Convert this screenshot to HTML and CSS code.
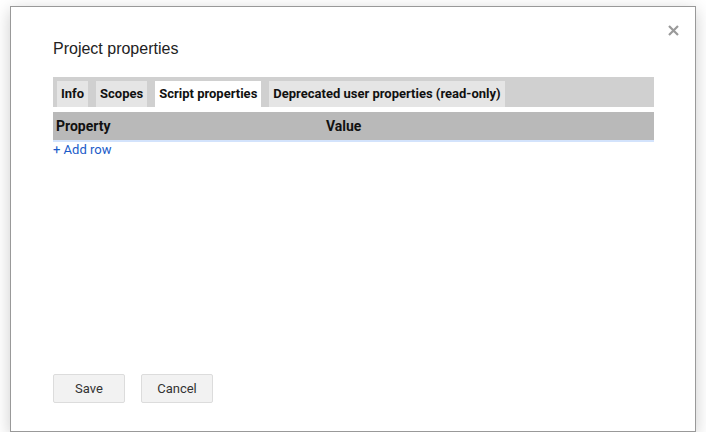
FILE: index.html
```html
<!DOCTYPE html>
<html>
<head>
<meta charset="utf-8">
<link rel="stylesheet" href="styles.css">
</head>
<body>
<div class="dialog">
  <button class="close" aria-label="Close">
    <svg width="11" height="11" viewBox="0 0 11 11"><path d="M1 1 L10 10 M10 1 L1 10" stroke="#9a9a9a" stroke-width="2.2" stroke-linecap="butt"/></svg>
  </button>
  <div class="body">
    <div class="title">Project properties</div>
    <div class="tabbar">
      <div class="tab">Info</div>
      <div class="tab">Scopes</div>
      <div class="tab active">Script properties</div>
      <div class="tab">Deprecated user properties (read-only)</div>
    </div>
    <div class="thead">
      <div class="th">Property</div>
      <div class="th">Value</div>
    </div>
    <a class="addrow" href="#">+ Add row</a>
  </div>
  <div class="buttons">
    <button class="btn">Save</button>
    <button class="btn">Cancel</button>
  </div>
</div>
</body>
</html>
```
FILE: styles.css
```css
html, body {
  margin: 0;
  padding: 0;
  background: #ffffff;
}
body {
  padding: 6px 10px 0 10px;
  font-family: Roboto, "Liberation Sans", Arial, sans-serif;
}
.dialog {
  position: relative;
  box-sizing: border-box;
  width: 686px;
  height: 426px;
  border: 1px solid #999999;
  background: #ffffff;
  box-shadow: 0 4px 16px rgba(0, 0, 0, 0.2);
  display: flex;
  flex-direction: column;
  padding: 0 41px 28px 42px;
}
.close {
  position: absolute;
  top: 18px;
  right: 16px;
  width: 11px;
  height: 11px;
  padding: 0;
  border: 0;
  background: transparent;
  display: flex;
}
.body {
  flex: 1;
  display: flex;
  flex-direction: column;
  align-items: flex-start;
}
.title {
  margin-top: 33px;
  font-family: "Liberation Sans", Arial, sans-serif;
  font-size: 16px;
  line-height: 18px;
  color: #222222;
}
.tabbar {
  align-self: stretch;
  margin-top: 19px;
  background: #d0d0d0;
  padding: 4px 4px 0 4px;
  display: flex;
  gap: 8px;
}
.tab {
  height: 26px;
  line-height: 26px;
  padding: 0 4px;
  background: #e5e5e5;
  font-size: 13px;
  font-weight: bold;
  color: #111111;
  white-space: nowrap;
}
.tab.active {
  background: #ffffff;
}
.thead {
  align-self: stretch;
  margin-top: 5px;
  display: grid;
  grid-template-columns: 270px 1fr;
  background: #b9b9b9;
  border-bottom: 2px solid #d3e3fc;
}
.th {
  height: 28px;
  line-height: 28px;
  padding: 0 3px;
  font-size: 14px;
  font-weight: bold;
  color: #111111;
}
.addrow {
  font-size: 13px;
  line-height: 16px;
  color: #1a5bc9;
  text-decoration: none;
}
.buttons {
  display: flex;
  gap: 16px;
}
.btn {
  box-sizing: border-box;
  width: 72px;
  height: 29px;
  padding: 0;
  background: #f2f2f2;
  border: 1px solid #dcdcdc;
  border-radius: 2px;
  font-family: Roboto, "Liberation Sans", Arial, sans-serif;
  font-size: 13px;
  color: #333333;
}
```
